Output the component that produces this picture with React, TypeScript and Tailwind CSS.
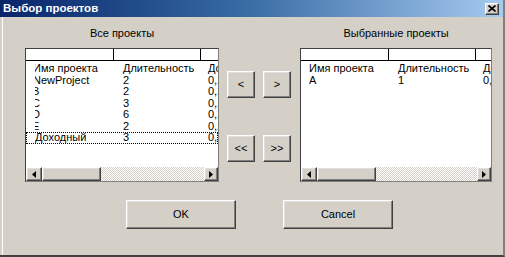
import React from 'react';

type Row = { name: string; dur: string; share: string; clip?: string; focus?: boolean };

const allProjects: Row[] = [
  { name: 'Имя проекта', dur: 'Длительность', share: 'Доля', clip: '-ml-[2px]' },
  { name: 'NewProject', dur: '2', share: '0,25', clip: '-ml-[2px]' },
  { name: 'B', dur: '2', share: '0,25', clip: '-ml-[3px]' },
  { name: 'C', dur: '3', share: '0,25', clip: '-ml-[3px]' },
  { name: 'D', dur: '6', share: '0,25', clip: '-ml-[3px]' },
  { name: 'E', dur: '2', share: '0,25', clip: '-ml-[3px]' },
  { name: 'Доходный', dur: '3', share: '0,25', focus: true },
];

const chosenProjects: Row[] = [
  { name: 'Имя проекта', dur: 'Длительность', share: 'Доля' },
  { name: 'A', dur: '1', share: '0,5' },
];

const raised =
  'bg-[#d4d0c8] border border-t-white border-l-white border-b-[#404040] border-r-[#404040] shadow-[inset_-1px_-1px_#808080,inset_1px_1px_#dfdfdf]';

function ArrowButton({ dir, wide }: { dir: 'left' | 'right'; wide?: boolean }) {
  return (
    <div className={`${raised} ${wide ? 'w-[16px]' : 'w-[14px]'} h-full flex items-center justify-center shrink-0`}>
      <svg width="4" height="7" viewBox="0 0 4 7">
        {dir === 'left' ? <polygon points="4,0 4,7 0,3.5" fill="#000" /> : <polygon points="0,0 0,7 4,3.5" fill="#000" />}
      </svg>
    </div>
  );
}

function ProjectList({ rows, firstPad }: { rows: Row[]; firstPad: string }) {
  return (
    <div className="w-full h-[134px] bg-white border border-t-[#404040] border-l-[#404040] border-b-[#808080] border-r-[#808080] flex flex-col overflow-hidden">
      {/* header */}
      <div className="h-[12px] shrink-0 flex border-b border-black">
        <div className="w-[88px] shrink-0 border-r border-black" />
        <div className="w-[87px] shrink-0 border-r border-black" />
        <div className="flex-1" />
      </div>

      {/* rows */}
      <div className="flex-1 pt-[2px] overflow-hidden">
        {rows.map((r, i) => (
          <div
            key={i}
            className={`flex h-[11.5px] leading-[11.5px] whitespace-nowrap ${
              r.focus ? 'outline-1 outline-dotted outline-black -outline-offset-1' : ''
            }`}
          >
            <div className={`w-[88px] shrink-0 ${firstPad}`}>
              <div className="overflow-hidden">
                <span className={r.clip ? `inline-block ${r.clip}` : ''}>{r.name}</span>
              </div>
            </div>
            <div className="w-[87px] shrink-0 pl-[9px]">{r.dur}</div>
            <div className="flex-1 pl-[7px] overflow-hidden">{r.share}</div>
          </div>
        ))}
      </div>

      {/* horizontal scrollbar */}
      <div className="h-[14px] shrink-0 flex bg-[repeating-conic-gradient(#d4d0c8_0_25%,#ffffff_0_50%)] bg-[length:2px_2px]">
        <ArrowButton dir="left" wide />
        <div className={`${raised} w-[59px] h-full`} />
        <div className="flex-1" />
        <ArrowButton dir="right" />
      </div>
    </div>
  );
}

function PushButton({ label, className }: { label: string; className: string }) {
  return <div className={`${raised} ${className} flex items-center justify-center`}>{label}</div>;
}

export default function App() {
  return (
    <div className="w-[505px] h-[257px] bg-[#d4d0c8] flex flex-col overflow-hidden text-[11px] text-black font-['Liberation_Sans',Arial,sans-serif] border-r-2 border-r-[#808080] border-b-2 border-b-[#404040]">
      {/* title bar */}
      <div className="h-[17px] shrink-0 flex items-center pl-[3px] pr-[4px] bg-gradient-to-r from-[#0a246a] via-[#3a6ea5] to-[#a6caf0]">
        <span className="text-white font-bold text-[11.5px] leading-none">Выбор проектов</span>
        <div className={`${raised} ml-auto w-[14px] h-[12px] flex items-center justify-center`}>
          <svg width="8" height="7" viewBox="0 0 8 7">
            <path d="M0.5 0.5 L7.5 6.5 M7.5 0.5 L0.5 6.5" stroke="#000" strokeWidth="1.6" />
          </svg>
        </div>
      </div>

      {/* body */}
      <div className="flex-1 flex flex-col pl-[25px] pt-[10px] border-l border-l-white ml-[2px]">
        <div className="flex items-start -ml-[3px]">
          <div className="w-[194px] flex flex-col items-center">
            <div className="h-[12px] leading-[12px]">Все проекты</div>
            <div className="mt-[9px] w-full">
              <ProjectList rows={allProjects} firstPad="pl-[9px]" />
            </div>
          </div>

          <div className="ml-[8px] pt-[44px] grid grid-cols-2 gap-x-[8px] gap-y-[37px]">
            <PushButton label="<" className="w-[28px] h-[27px]" />
            <PushButton label=">" className="w-[28px] h-[27px]" />
            <PushButton label="<<" className="w-[28px] h-[27px]" />
            <PushButton label=">>" className="w-[28px] h-[27px]" />
          </div>

          <div className="ml-[9px] w-[192px] flex flex-col items-center">
            <div className="h-[12px] leading-[12px]">Выбранные проекты</div>
            <div className="mt-[9px] w-full">
              <ProjectList rows={chosenProjects} firstPad="pl-[8px]" />
            </div>
          </div>
        </div>

        <div className="flex mt-[18px] pl-[98px] gap-[47px]">
          <PushButton label="OK" className="w-[110px] h-[29px]" />
          <PushButton label="Cancel" className="w-[110px] h-[29px]" />
        </div>
      </div>
    </div>
  );
}
